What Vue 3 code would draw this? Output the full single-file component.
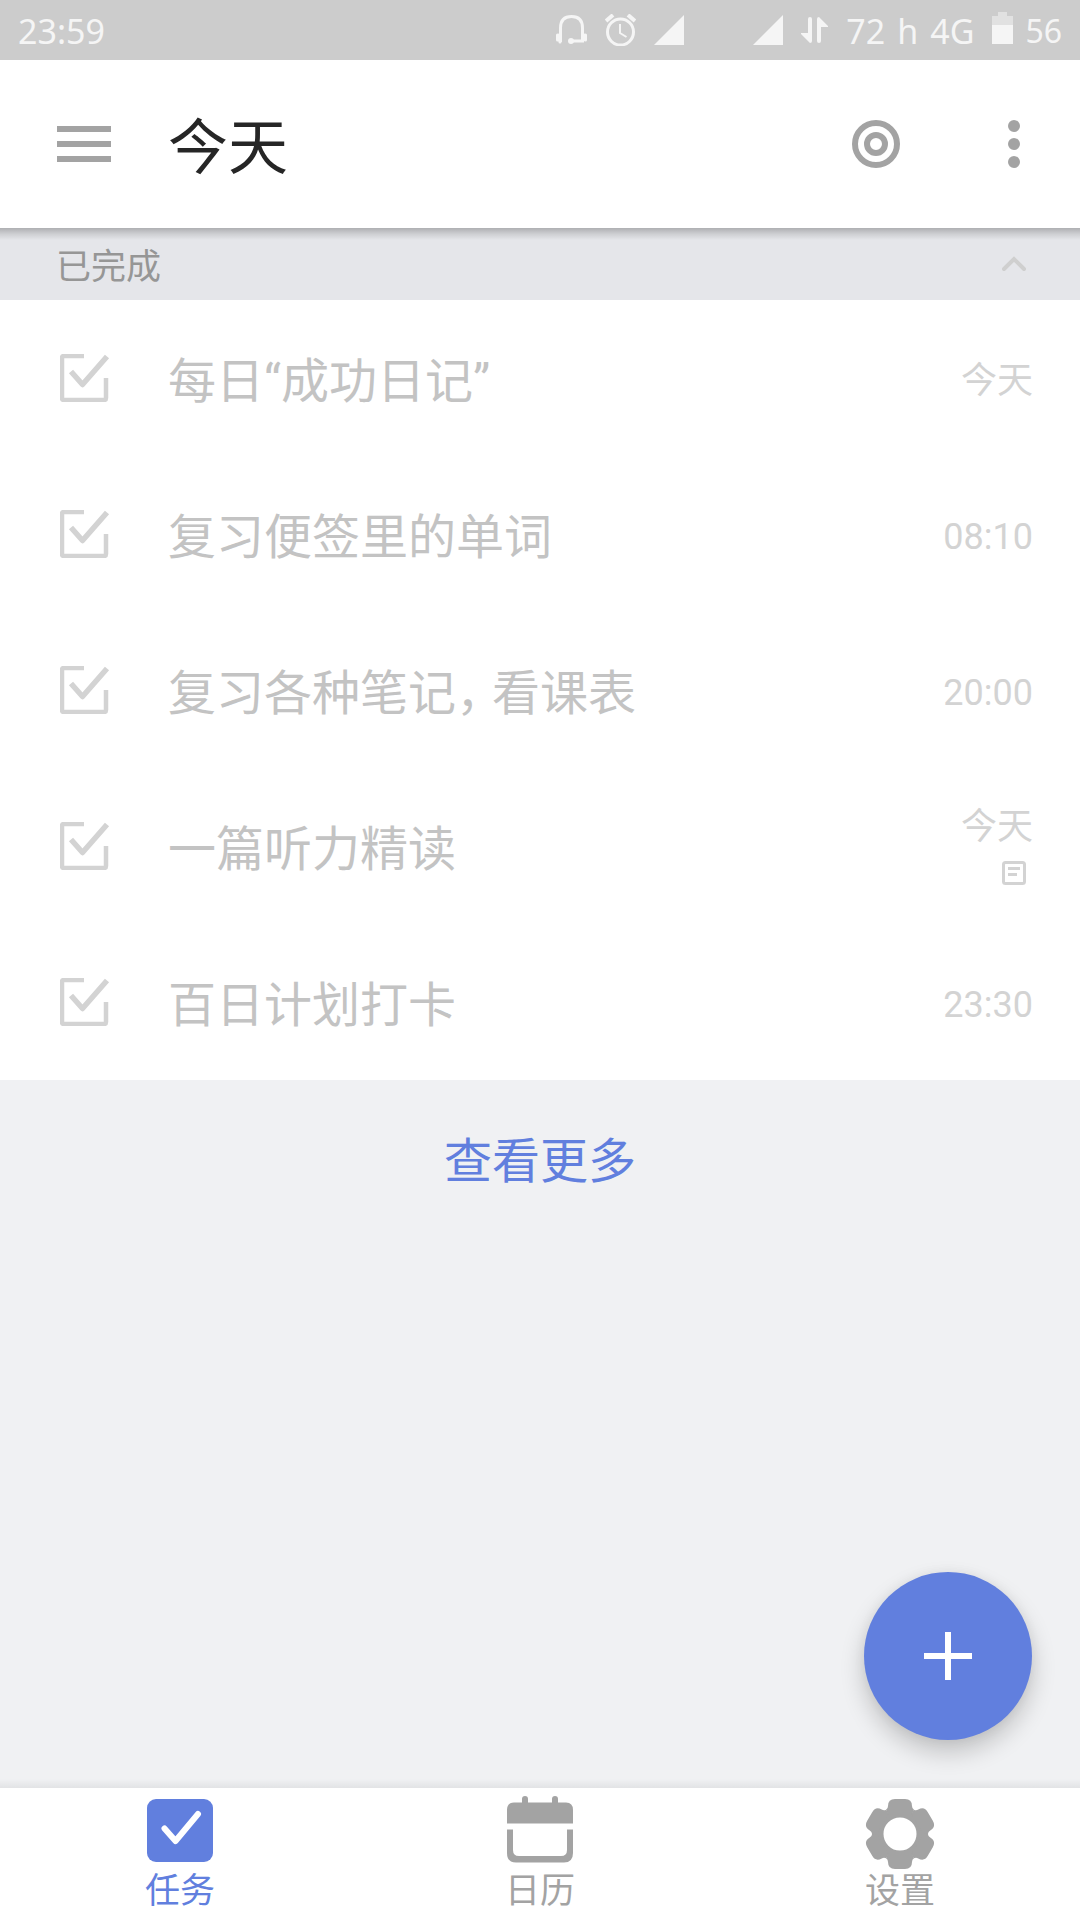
<script setup>
import { ref } from 'vue'

const tasks = ref([
  { id: 1, title: ['每日“成功日记”'], when: '今天', done: true },
  { id: 2, title: ['复习便签里的单词'], when: '08:10', done: true },
  { id: 3, title: ['复习各种笔记', '看课表'], when: '20:00', done: true },
  { id: 4, title: ['一篇听力精读'], when: '今天', note: true, done: true },
  { id: 5, title: ['百日计划打卡'], when: '23:30', done: true },
])

const toothAngles = [0, 60, 120, 180, 240, 300]
</script>

<template>
  <div class="screen">
    <div class="status">
      <span>23:59</span>
      <div class="status-items">
        <svg width="31" height="32" viewBox="0 0 31 32" fill="none" stroke="#f5f5f5" stroke-width="3">
          <path d="M4.500 28V14C4.500 6 9 2.500 15.500 2.500S26.500 6 26.500 14V27H15" />
          <path d="M1.500 21V26M29.500 21V26M4 20V28M27 20V26" stroke-linecap="round" />
          <circle cx="15" cy="27" r="3" fill="#f5f5f5" stroke="none" />
        </svg>
        <svg width="31" height="32" viewBox="0 0 31 32" fill="none" stroke="#f5f5f5" stroke-width="3">
          <circle cx="15.500" cy="18" r="13" />
          <path d="M15 10V19L21.500 23" stroke-width="2" />
          <path d="M1 7L8 1M30 7L23 1" stroke-width="4" />
        </svg>
        <svg width="30" height="32" viewBox="0 0 30 32"><path d="M30 1V31H0Z" fill="#f5f5f5" /></svg>
        <span class="empty-slot"></span>
        <svg width="30" height="32" viewBox="0 0 30 32"><path d="M30 1V31H0Z" fill="#f5f5f5" /></svg>
        <svg width="27" height="32" viewBox="0 0 27 32" fill="#f5f5f5">
          <path d="M7 5Q7 3 9 3T11 5V27Q11 29 9 29L0 20V19H7Z" />
          <path d="M16 5Q16 3 18 3L27 12V13H20V27Q20 29 18 29T16 27Z" />
        </svg>
        <div class="readout">
          <span>72</span>
          <span>h</span>
          <span>4G</span>
        </div>
        <div class="readout">
          <svg width="21" height="36" viewBox="0 0 21 36">
            <path d="M6 0H15V4H21V13H0V4H6Z" fill="#e1e1e1" />
            <path d="M0 13H21V32H0Z" fill="#f5f5f5" />
          </svg>
          <span class="charge">56</span>
        </div>
      </div>
    </div>

    <header class="appbar">
      <button class="icon-btn" aria-label="菜单">
        <svg width="54" height="36" viewBox="0 0 54 36" fill="#a3a3a3">
          <path d="M0 0H54V6H0ZM0 15H54V21H0ZM0 30H54V36H0Z" />
        </svg>
      </button>
      <h1>今天</h1>
      <button class="icon-btn" aria-label="专注">
        <svg width="48" height="48" viewBox="0 0 48 48" fill="none" stroke="#a3a3a3" stroke-width="6">
          <circle cx="24" cy="24" r="21" />
          <circle cx="24" cy="24" r="9" />
        </svg>
      </button>
      <button class="icon-btn more" aria-label="更多">
        <svg width="12" height="48" viewBox="0 0 12 48" fill="#a3a3a3">
          <circle cx="6" cy="6" r="6" />
          <circle cx="6" cy="24" r="6" />
          <circle cx="6" cy="42" r="6" />
        </svg>
      </button>
    </header>

    <main>
      <button class="section">
        <span>已完成</span>
        <svg width="24" height="16" viewBox="0 0 24 16" fill="none" stroke="#cfcfcf" stroke-width="4" stroke-linecap="round">
          <path d="M2 13L12 3L22 13" />
        </svg>
      </button>

      <ul class="tasks">
        <li v-for="task in tasks" :key="task.id">
          <label>
            <span class="box">
              <input v-model="task.done" type="checkbox" />
              <svg width="50" height="48" viewBox="0 0 50 48" fill="none" stroke="#d3d3d3">
                <path d="M24 2H4Q2 2 2 4V44Q2 46 4 46H44Q46 46 46 44V24" stroke-width="4.500" />
                <path v-if="task.done" d="M11 17.500L22.500 30.500L47 2.500" stroke-width="5.500" stroke-linejoin="round" />
              </svg>
            </span>
            <span class="title"><template v-for="(part, i) in task.title" :key="i"><span v-if="i" class="comma">，</span>{{ part }}</template></span>
          </label>
          <div class="meta" :class="{ 'with-note': task.note }">
            <time>{{ task.when }}</time>
            <svg v-if="task.note" width="24" height="24" viewBox="0 0 24 24" fill="none" stroke="#d3d3d3" stroke-width="3">
              <rect x="1.500" y="1.500" width="21" height="21" rx="2" />
              <path d="M6 7.500H18M6 13.500H15" />
            </svg>
          </div>
        </li>
      </ul>

      <button class="load-more">查看更多</button>
    </main>

    <footer>
      <button class="fab" aria-label="添加任务">
        <svg width="48" height="48" viewBox="0 0 48 48" fill="#fff"><path d="M21 0H27V21H48V27H27V48H21V27H0V21H21Z" /></svg>
      </button>
      <nav>
        <a href="#tasks" class="active">
          <svg width="72" height="78" viewBox="0 0 72 78">
            <rect x="3" y="5" width="66" height="63" rx="9" fill="#617fde" />
            <path d="M20.500 34.500L31.500 47L54 20" fill="none" stroke="#fff" stroke-width="6" stroke-linecap="round" stroke-linejoin="round" />
          </svg>
          <span>任务</span>
        </a>
        <a href="#calendar">
          <svg width="72" height="78" viewBox="0 0 72 78" fill="#a3a3a3">
            <path d="M3 29.500V16Q3 8.500 10 8.500H18V5Q18 2 21 2T24 5V8.500H48V5Q48 2 51 2T54 5V8.500H62Q69 8.500 69 16V29.500Z" />
            <path d="M3 35.500H9V56Q9 62 15 62H57Q63 62 63 56V35.500H69V59Q69 68.500 60 68.500H12Q3 68.500 3 59Z" />
          </svg>
          <span>日历</span>
        </a>
        <a href="#settings">
          <svg width="72" height="78" viewBox="0 0 72 78" fill="#a3a3a3">
            <g transform="translate(36 40)">
              <circle r="20.500" fill="none" stroke="#a3a3a3" stroke-width="8" />
              <path
                v-for="angle in toothAngles"
                :key="angle"
                :transform="`rotate(${angle})`"
                d="M-12 -20L-14 -24.200Q-12 -25.500 -12 -28Q-12 -35 -5 -35H5Q12 -35 12 -28Q12 -25.500 14 -24.200L12 -20Z"
              />
            </g>
          </svg>
          <span>设置</span>
        </a>
      </nav>
    </footer>
  </div>
</template>

<style>
body {
  margin: 0;
}
</style>

<style scoped>
.screen {
  display: flex;
  flex-direction: column;
  min-height: 100vh;
  background: #f0f1f3;
  font-family: Roboto, "Noto Sans CJK SC", sans-serif;
}

svg {
  display: block;
  flex: none;
}

button {
  margin: 0;
  padding: 0;
  border: 0;
  background: none;
  font: inherit;
  cursor: pointer;
}

.status {
  display: flex;
  align-items: center;
  justify-content: space-between;
  height: 60px;
  padding: 0 18px;
  background: #ccc;
  color: #f5f5f5;
  font-family: "Noto Sans", "Noto Sans CJK SC", sans-serif;
  font-size: 34px;
  line-height: 60px;
}

.status span {
  padding-top: 2px;
}

.status-items {
  display: flex;
  align-items: center;
  gap: 18px;
}

.readout {
  display: flex;
  align-items: center;
  gap: 12px;
}

.charge {
  font-size: 32px;
}

.empty-slot {
  width: 33px;
}

.appbar {
  position: relative;
  display: flex;
  align-items: center;
  height: 168px;
  padding: 0 60px 0 57px;
  background: #fff;
}

.appbar::after {
  content: "";
  position: absolute;
  inset: 100% 0 auto;
  height: 12px;
  background: linear-gradient(rgba(0, 0, 0, 0.24), rgba(0, 0, 0, 0.1) 50%, transparent);
}

h1 {
  flex: 1;
  margin: 0 0 0 57px;
  padding-top: 10px;
  color: #262626;
  font-size: 60px;
  font-weight: 400;
  line-height: 72px;
}

.more {
  margin-left: 108px;
}

.section {
  display: flex;
  align-items: center;
  justify-content: space-between;
  width: 100%;
  height: 72px;
  padding: 0 54px 0 56px;
  background: #e5e6ea;
  color: #969696;
  font-size: 35px;
  line-height: 48px;
}

.section span {
  padding-top: 8px;
}

.tasks {
  margin: 0;
  padding: 0;
  list-style: none;
  background: #fff;
}

li {
  display: flex;
  align-items: center;
  justify-content: space-between;
  height: 156px;
  padding: 0 47px 0 60px;
}

label {
  display: flex;
  align-items: center;
  gap: 58px;
}

.box {
  position: relative;
}

.box input {
  position: absolute;
  inset: 0;
  width: 100%;
  height: 100%;
  margin: 0;
  opacity: 0;
}

.title {
  padding-top: 8px;
  color: #c3c3c3;
  font-size: 48px;
  line-height: 60px;
  white-space: nowrap;
}

.comma {
  display: inline-block;
  width: 36px;
  font-feature-settings: "halt";
}

.meta {
  display: flex;
  flex-direction: column;
  align-items: flex-end;
  gap: 10px;
  padding-top: 6px;
  color: #d3d3d3;
  font-size: 36px;
  line-height: 48px;
}

.with-note {
  padding: 0 0 4px;
}

.meta svg {
  margin-right: 7px;
}

.load-more {
  display: block;
  width: 100%;
  height: 156px;
  padding-bottom: 2px;
  color: #617fde;
  font-size: 48px;
}

footer {
  position: relative;
  margin-top: auto;
  background: #fff;
}

footer::before {
  content: "";
  position: absolute;
  inset: auto 0 100%;
  height: 9px;
  background: linear-gradient(transparent, rgba(0, 0, 0, 0.06));
}

.fab {
  position: absolute;
  right: 48px;
  bottom: calc(100% + 48px);
  display: grid;
  place-items: center;
  width: 168px;
  height: 168px;
  border-radius: 50%;
  background: #617fde;
  box-shadow: 0 12px 24px rgba(0, 0, 0, 0.2), 0 0 12px rgba(0, 0, 0, 0.05);
}

nav {
  display: grid;
  grid-template-columns: repeat(3, 1fr);
}

nav a {
  display: flex;
  flex-direction: column;
  align-items: center;
  padding: 6px 0 8px;
  color: #a3a3a3;
  font-size: 35px;
  line-height: 40px;
  text-decoration: none;
}

nav .active {
  color: #617fde;
}
</style>
